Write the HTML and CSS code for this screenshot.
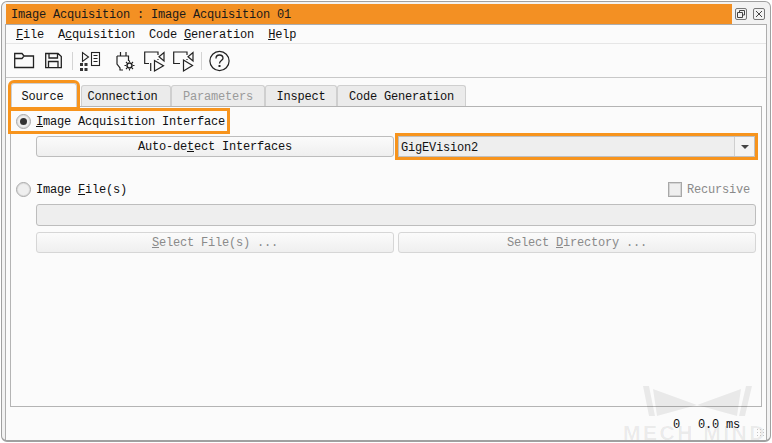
FILE: index.html
```html
<!DOCTYPE html>
<html lang="en">
<head>
    <meta charset="UTF-8">
    <title>Image Acquisition</title>
    <link rel="stylesheet" href="styles.css">
</head>
<body>
    <div class="window">
        <div class="titlebar">
            <div class="title">Image Acquisition : Image Acquisition 01</div>
            <div class="winbtn">
                <svg width="12" height="12" viewBox="0 0 12 12"><rect x="0.5" y="0.5" width="11" height="11" rx="1.5" fill="none" stroke="#777"/><path d="M4.5 4V2.5H9.5V7H8M2.5 4.5H7.5V9.5H2.5Z" fill="none" stroke="#444"/></svg>
            </div>
            <div class="winbtn">
                <svg width="12" height="12" viewBox="0 0 12 12"><rect x="0.5" y="0.5" width="11" height="11" rx="1.5" fill="none" stroke="#777"/><path d="M3 3L9 9M9 3L3 9" fill="none" stroke="#444"/></svg>
            </div>
        </div>
        <div class="inner">
            <div class="menubar">
                <span><u>F</u>ile</span>
                <span>A<u>c</u>quisition</span>
                <span>Code <u>G</u>eneration</span>
                <span><u>H</u>elp</span>
            </div>
            <div class="toolbar">
                <svg class="ico ico-folder" width="22" height="33" viewBox="0 0 22 33"><path d="M0.7 23.5V9.5H8L10 12H19.5V23.5ZM0.7 14.5H8L10 12" fill="none" stroke="#222" stroke-width="1.3"/></svg>
                <svg class="ico ico-save" width="18" height="33" viewBox="0 0 18 33"><path d="M0.7 9.5H13L16.3 12.5V23.7H0.7ZM4 9.5V14H12.5V9.5M3.5 23.7V17.5H13V23.7" fill="none" stroke="#222" stroke-width="1.3"/></svg>
                <div class="sep sep-a"></div>
                <svg class="ico ico-list" width="22" height="33" viewBox="0 0 22 33"><path d="M2.5 8.5V17.5L8.5 13Z" fill="none" stroke="#222" stroke-width="1.1"/><rect x="11.5" y="8.5" width="8" height="13" fill="none" stroke="#222" stroke-width="1.1"/><path d="M13.5 11.5H17.5M13.5 14.5H17.5M13.5 17.5H17.5" stroke="#222"/><path d="M0 19H3V22H0ZM4.5 19H7.5V22H4.5ZM0 24H3V27H0ZM4.5 24H7.5V27H4.5Z" fill="#333"/></svg>
                <svg class="ico ico-plug" width="20" height="33" viewBox="0 0 20 33"><path d="M4.5 8V12M10 8V12M1 12H12.5V17M1 12V20L4 24V26H7" fill="none" stroke="#222" stroke-width="1.2"/><circle cx="13.5" cy="21.5" r="2.5" fill="none" stroke="#222" stroke-width="1.5"/><path d="M13.5 16.5V18M13.5 25V26.5M8.5 21.5H10M17 21.5H18.5M10 18L11 19M16 24L17 25M17 18L16 19M11 24L10 25" stroke="#222" stroke-width="1.1"/></svg>
                <svg class="ico ico-run" width="22" height="33" viewBox="0 0 22 33"><path d="M5 19.5H0.7V8H14V11M14 15V16" fill="none" stroke="#222" stroke-width="1.2"/><path d="M20 8.5V17L15 12.7Z" fill="none" stroke="#222" stroke-width="1.2"/><path d="M6.7 19V27M10.5 16.5V27L19.5 21.7Z" fill="none" stroke="#222" stroke-width="1.2"/></svg>
                <svg class="ico ico-play" width="21" height="33" viewBox="0 0 21 33"><path d="M7 19.5H0.7V8H14V11M14 15V16" fill="none" stroke="#222" stroke-width="1.2"/><path d="M20 8.5V17L15 12.7Z" fill="none" stroke="#222" stroke-width="1.2"/><path d="M10.5 16V27L19.5 21.5Z" fill="none" stroke="#222" stroke-width="1.2"/></svg>
                <div class="sep sep-b"></div>
                <svg class="ico ico-help" width="22" height="33" viewBox="0 0 22 33"><circle cx="10.5" cy="17" r="9.6" fill="none" stroke="#222" stroke-width="1.2"/><path d="M7 14.5C7 12.3 8.5 11 10.5 11S14 12.3 14 14.2C14 16.5 10.5 16.8 10.5 19.5" fill="none" stroke="#222" stroke-width="1.3"/><rect x="9.5" y="21" width="2" height="2" fill="#222"/></svg>
            </div>
            <div class="tabs">
                <div class="tab active hl">Source</div>
                <div class="tab tab-conn">Connection</div>
                <div class="tab off">Parameters</div>
                <div class="tab tab-ins">Inspect</div>
                <div class="tab tab-code">Code Generation</div>
            </div>
            <div class="panel">
                <div class="radio-row hl">
                    <span class="radio checked"></span>
                    <span class="lbl"><u>I</u>mage Acquisition Interface</span>
                </div>
                <div class="row row-iface">
                    <div class="btn btn-detect">Auto-de<u>t</u>ect Interfaces</div>
                    <div class="combo hl">
                        <span class="combo-text">GigEVision2</span>
                        <span class="combo-arrow"></span>
                    </div>
                </div>
                <div class="row row-file">
                    <div class="radio-file">
                        <span class="radio"></span>
                        <span class="lbl">Image <u>F</u>ile(s)</span>
                    </div>
                    <div class="recursive">
                        <span class="check"></span>
                        <span class="lbl">Recursive</span>
                    </div>
                </div>
                <div class="fileinput"></div>
                <div class="row row-select">
                    <div class="btn disabled"><u>S</u>elect File(s) ...</div>
                    <div class="btn disabled">Select <u>D</u>irectory ...</div>
                </div>
            </div>
            <div class="status">
                <span class="status-count">0</span>
                <span class="status-time">0.0 ms</span>
                <span class="grip"></span>
            </div>
        </div>
        <!-- marca de agua -->
        <div class="watermark">
            <svg width="148" height="33" viewBox="0 0 148 33"><path d="M20 2H26L32 32H26ZM129 2H123L116 32H122ZM30 5L74 21L34 32ZM118 5L74 21L114 32Z" fill="rgba(0,0,0,0.07)"/></svg>
            <div class="watermark-text">MECH MIND</div>
        </div>
    </div>
</body>
</html>
```
FILE: styles.css
```css
html, body {
    margin: 0;
    padding: 0;
    background: #fff;
}
body {
    width: 772px;
    height: 443px;
    overflow: hidden;
    font-family: "Liberation Mono", monospace;
    font-size: 12px;
    letter-spacing: -0.2px;
    color: #111;
}
u {
    text-underline-offset: 1px;
}
.window {
    position: relative;
    width: 770px;
    height: 441px;
    margin: 1px 0 0 1px;
    box-sizing: border-box;
    padding: 2px 3px 0 3px;
    background: #f2f2f2;
    border: 1px solid #a0a0a0;
    border-bottom-width: 2px;
    border-radius: 6px;
    display: flex;
    flex-direction: column;
}
.titlebar {
    display: flex;
    align-items: center;
    height: 20px;
    flex: none;
}
.title {
    flex: none;
    width: 726px;
    height: 20px;
    line-height: 23px;
    box-sizing: border-box;
    margin-left: 1px;
    padding-left: 5px;
    background: #f39023;
    color: #1a1a1a;
}
.winbtn {
    flex: none;
    width: 12px;
    height: 12px;
    margin-left: 3px;
    margin-right: 3px;
    display: flex;
}
.inner {
    flex: 1;
    display: flex;
    flex-direction: column;
    background: #fbfbfb;
    border: 1px solid #adadad;
    border-bottom: none;
}
.menubar {
    flex: none;
    box-sizing: border-box;
    height: 19px;
    display: flex;
    align-items: center;
    padding: 2px 0 0 10px;
    gap: 14px;
    border-bottom: 1px solid #e6e6e6;
}
.toolbar {
    flex: none;
    height: 33px;
    display: flex;
    align-items: center;
    border-bottom: 1px solid #c8c8c8;
    padding-left: 8px;
}
.ico {
    flex: none;
    display: block;
}
.ico-save {
    margin-left: 9px;
}
.sep {
    flex: none;
    width: 1px;
    height: 18px;
    background: #d4d4d4;
}
.sep-a {
    margin: 0 7px 0 9px;
}
.ico-plug {
    margin-left: 14px;
}
.ico-run {
    margin-left: 8px;
}
.ico-play {
    margin-left: 7px;
}
.sep-b {
    margin: 0 7px 0 7px;
}
.tabs {
    flex: none;
    display: flex;
    align-items: flex-end;
    height: 28px;
    padding-left: 5px;
    position: relative;
    z-index: 1;
}
.tab {
    flex: none;
    box-sizing: border-box;
    height: 21px;
    line-height: 23px;
    text-align: center;
    background: #ebebeb;
    border: 1px solid #cfcfcf;
    border-bottom: none;
    border-radius: 3px 3px 0 0;
    color: #111;
}
.tab.active {
    width: 66px;
    height: 24px;
    line-height: 27px;
    background: #fbfbfb;
    padding-right: 3px;
    margin-right: 4px;
    margin-bottom: -1px;
}
.tab.tab-conn {
    width: 90px;
    padding-right: 7px;
}
.tab.off {
    width: 94px;
    color: #9a9a9a;
}
.tab.tab-ins {
    width: 72px;
}
.tab.tab-code {
    width: 129px;
}
.hl {
    outline: 3px solid #f7941d;
}
.panel {
    flex: none;
    height: 301px;
    box-sizing: border-box;
    margin: 0 4px;
    padding: 4px 5px 0 0;
    border: 1px solid #b4b4b4;
    background: #fbfbfb;
}
.lbl {
    padding-top: 2px;
}
.radio-row {
    display: flex;
    align-items: center;
    width: 216px;
    height: 20px;
    padding-left: 5px;
    gap: 5px;
    box-sizing: border-box;
}
.radio {
    flex: none;
    box-sizing: border-box;
    display: flex;
    align-items: center;
    justify-content: center;
    width: 15px;
    height: 15px;
    border-radius: 50%;
    border: 1px solid #a8a8a8;
    background: #efefef;
    box-shadow: inset 0 0 0 1px #dcdcdc;
}
.radio.checked::after {
    content: "";
    width: 7px;
    height: 7px;
    border-radius: 50%;
    background: #333;
}
.row {
    display: flex;
}
.row-iface {
    margin-top: 5px;
    padding-left: 25px;
    gap: 4px;
    height: 21px;
}
.btn {
    flex: 1;
    box-sizing: border-box;
    height: 21px;
    line-height: 21px;
    text-align: center;
    border: 1px solid #bdbdbd;
    border-radius: 3px;
    background: linear-gradient(#fbfbfb, #efefef);
}
.btn-detect {
    flex: none;
    width: 358px;
}
.combo {
    flex: 1;
    box-sizing: border-box;
    height: 21px;
    margin-right: 1px;
    display: flex;
    background: #eeeeee;
    border: 1px solid #c0c0c0;
}
.combo-text {
    flex: 1;
    line-height: 22px;
    padding-left: 2px;
}
.combo-arrow {
    flex: none;
    width: 19px;
    border-left: 1px solid #cfcfcf;
    background: #f4f4f4;
    display: flex;
    align-items: center;
    justify-content: center;
}
.combo-arrow::after {
    content: "";
    border-left: 4px solid transparent;
    border-right: 4px solid transparent;
    border-top: 4px solid #444;
}
.row-file {
    justify-content: space-between;
    align-items: center;
    margin-top: 22px;
    height: 20px;
    padding-left: 5px;
    padding-right: 6px;
}
.radio-file {
    display: flex;
    align-items: center;
    gap: 5px;
}
.recursive {
    display: flex;
    align-items: center;
    gap: 5px;
    color: #8a8a8a;
}
.check {
    flex: none;
    box-sizing: border-box;
    width: 14px;
    height: 15px;
    border: 1px solid #a8a8a8;
    background: #efefef;
    box-shadow: inset 0 0 0 1px #d4d4d4;
}
.fileinput {
    box-sizing: border-box;
    height: 22px;
    margin: 5px 0 0 25px;
    background: #eeeeee;
    border: 1px solid #bdbdbd;
    border-radius: 3px;
}
.row-select {
    gap: 4px;
    margin: 6px 0 0 25px;
}
.btn.disabled {
    color: #8a8a8a;
    border-color: #d6d6d6;
}
.status {
    flex: 1;
    position: relative;
    z-index: 1;
    display: flex;
    align-items: center;
    justify-content: flex-end;
    padding: 2px 26px 0 0;
}
.status-time {
    margin-left: 18px;
}
.grip {
    position: absolute;
    right: 1px;
    bottom: 3px;
    width: 9px;
    height: 9px;
    background-image: radial-gradient(#c4c4c4 1px, transparent 1px);
    background-size: 3px 3px;
}
.watermark {
    position: absolute;
    left: 621px;
    top: 382px;
    width: 147px;
    height: 57px;
    pointer-events: none;
}
.watermark svg {
    display: block;
}
.watermark-text {
    position: absolute;
    left: 0;
    top: 38px;
    font-family: "Liberation Sans", sans-serif;
    font-weight: bold;
    font-size: 21px;
    line-height: 21px;
    letter-spacing: 2.5px;
    white-space: nowrap;
    color: rgba(0, 0, 0, 0.07);
}
```
